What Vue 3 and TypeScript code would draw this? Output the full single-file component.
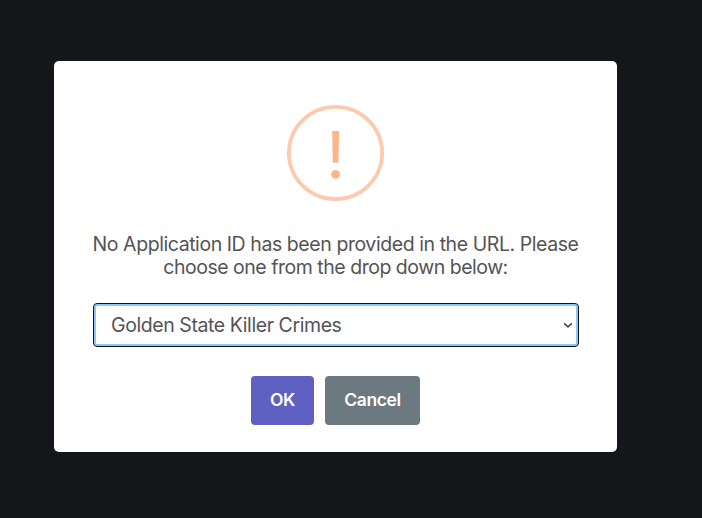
<script setup lang="ts">
import { ref } from 'vue'

const applications: string[] = ['Golden State Killer Crimes']
const selected = ref<string>(applications[0])
</script>

<template>
  <div class="backdrop">
    <div class="modal" role="dialog" aria-modal="true">
      <svg class="warning" viewBox="0 0 97 96" aria-hidden="true">
        <ellipse cx="48.5" cy="48" rx="46.6" ry="46.1" fill="none" stroke="#fccbae" stroke-width="3.8" />
        <path d="M45.2 26h6.8l-.5 30.5q-.1 1.3-1.3 1.3h-3.2q-1.2 0-1.3-1.3z" fill="#fbb68c" />
        <circle cx="48.6" cy="69.4" r="4.4" fill="#fbb68c" />
      </svg>
      <p class="message">
        <span class="first">No Application ID has been provided in the URL. Please</span>
        <span class="second">choose one from the drop down below:</span>
      </p>
      <div class="field">
        <select v-model="selected" class="select">
          <option v-for="app in applications" :key="app" :value="app">{{ app }}</option>
        </select>
        <svg class="chevron" viewBox="0 0 10 7" aria-hidden="true">
          <path d="M1.2 1.3L5 4.9l3.8-3.6" fill="none" stroke="#4c4c4c" stroke-width="1.7" />
        </svg>
      </div>
      <div class="actions">
        <button class="button ok" type="button">OK</button>
        <button class="button cancel" type="button">Cancel</button>
      </div>
    </div>
  </div>
</template>

<style>
body {
  margin: 0;
  background: #15161a;
}
</style>

<style scoped>
.backdrop {
  box-sizing: border-box;
  height: 518px;
  padding: 61px 85px 0 54px;
  background: #15161a;
  font-family: Inter, "Liberation Sans", sans-serif;
}
.modal {
  box-sizing: border-box;
  display: flex;
  flex-direction: column;
  align-items: center;
  height: 391px;
  padding: 44px 38px 27px 39px;
  border-radius: 5px;
  background: #fff;
}
.warning {
  display: block;
  width: 97px;
  height: 96px;
  margin-right: 1px;
}
.message {
  display: flex;
  flex-direction: column;
  align-items: center;
  margin: 32px 1px 0 0;
  color: #545454;
  font-size: 19.5px;
  line-height: 23px;
  white-space: nowrap;
}
.first {
  letter-spacing: -0.43px;
}
.second {
  letter-spacing: -0.48px;
}
.field {
  display: grid;
  align-items: center;
  align-self: stretch;
  margin-top: 24px;
}
.select,
.chevron {
  grid-area: 1 / 1;
}
.select {
  box-sizing: border-box;
  width: 100%;
  height: 44px;
  padding: 0 16px 0 17px;
  border: 1px solid #101114;
  border-radius: 4px;
  outline: none;
  appearance: none;
  background: #fff;
  box-shadow: inset 0 0 0 2px #8bc6fd;
  color: #545454;
  font: inherit;
  font-size: 19.5px;
  letter-spacing: -0.42px;
}
.chevron {
  justify-self: end;
  width: 10px;
  height: 7px;
  margin-right: 6px;
  pointer-events: none;
}
.actions {
  display: flex;
  gap: 11px;
  margin: 29px 1px 0 0;
}
.button {
  height: 49px;
  padding: 0 0 2px;
  border: 0;
  border-radius: 4px;
  color: #fff;
  font: inherit;
  font-size: 17.5px;
  font-weight: 600;
  letter-spacing: -0.42px;
}
.ok {
  width: 63px;
  background: #5f61c2;
}
.cancel {
  width: 95px;
  background: #6d7980;
}
</style>
